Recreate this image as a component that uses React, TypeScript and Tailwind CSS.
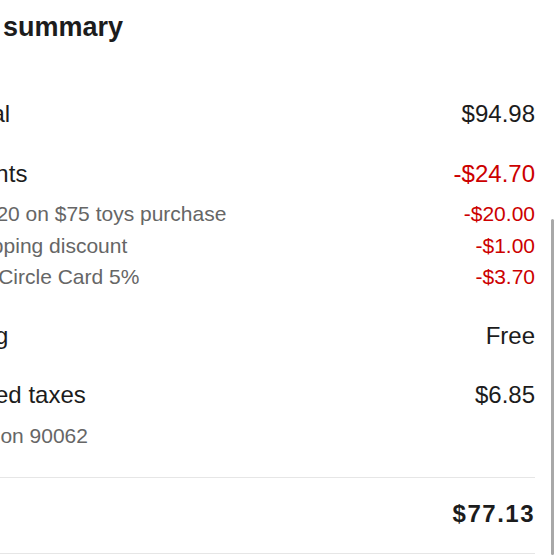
import React from "react";

const font = { fontFamily: '"Liberation Sans", Arial, Helvetica, sans-serif' };

function MainRow({ label, value, red, bold, className, labelClass }: { label: string; value: string; red?: boolean; bold?: boolean; className?: string; labelClass?: string }) {
  return (
    <div className={`flex justify-between h-[30px] leading-[30px] ${bold ? "font-bold text-[24px] tracking-[1.5px]" : "text-[24px]"} ${className ?? ""}`}>
      <span className={`text-[#1c1c1c] whitespace-nowrap ${labelClass ?? ""}`}>{label}</span>
      <span className={red ? "text-[#cc0000]" : "text-[#1c1c1c]"}>{value}</span>
    </div>
  );
}

function SubRow({ label, value, red, labelClass }: { label: string; value?: string; red?: boolean; labelClass?: string }) {
  return (
    <div className="flex justify-between h-[31.5px] leading-[31.5px] text-[21px] pl-[15px]">
      <span className={`text-[#666666] whitespace-nowrap ${labelClass ?? ""}`}>{label}</span>
      {value && <span className={red ? "text-[#cc0000]" : "text-[#666666]"}>{value}</span>}
    </div>
  );
}

export default function App() {
  return (
    <div className="relative w-[560px] h-[560px] overflow-hidden bg-white" style={font}>
      <div className="ml-[-78px] w-[613px] flex flex-col">
        <div className="mt-[11px] h-[32px] leading-[32px] text-[27px] font-bold text-[#1c1c1c] whitespace-nowrap">
          Order summary
        </div>
        <MainRow className="mt-[56px]" label="Subtotal" value="$94.98" />
        <MainRow className="mt-[30px]" label="Discounts" value="-$24.70" red />
        <div className="mt-[9px] flex flex-col">
          <SubRow label="Save $20 on $75 toys purchase" value="-$20.00" red labelClass="ml-[-6px]" />
          <SubRow label="Free shipping discount" value="-$1.00" red labelClass="ml-[-21px]" />
          <SubRow label="Target Circle Card 5%" value="-$3.70" red labelClass="ml-[-3px]" />
        </div>
        <MainRow className="mt-[28px]" label="Shipping" value="Free" labelClass="ml-[-7px]" />
        <MainRow className="mt-[29px]" label="Estimated taxes" value="$6.85" labelClass="ml-[-7px]" />
        <div className="mt-[10px]">
          <SubRow label="Based on 90062" labelClass="ml-[-2px]" />
        </div>
        <div className="mt-[26px] h-px bg-[#e6e6e6]" />
        <MainRow className="mt-[21px]" label="Total" value="$77.13" bold />
        <div className="mt-[24px] h-px bg-[#e6e6e6]" />
      </div>
      <div className="absolute left-[551px] top-[219px] w-[3px] h-[336px] rounded-full bg-[#a8a8a8]" />
    </div>
  );
}
